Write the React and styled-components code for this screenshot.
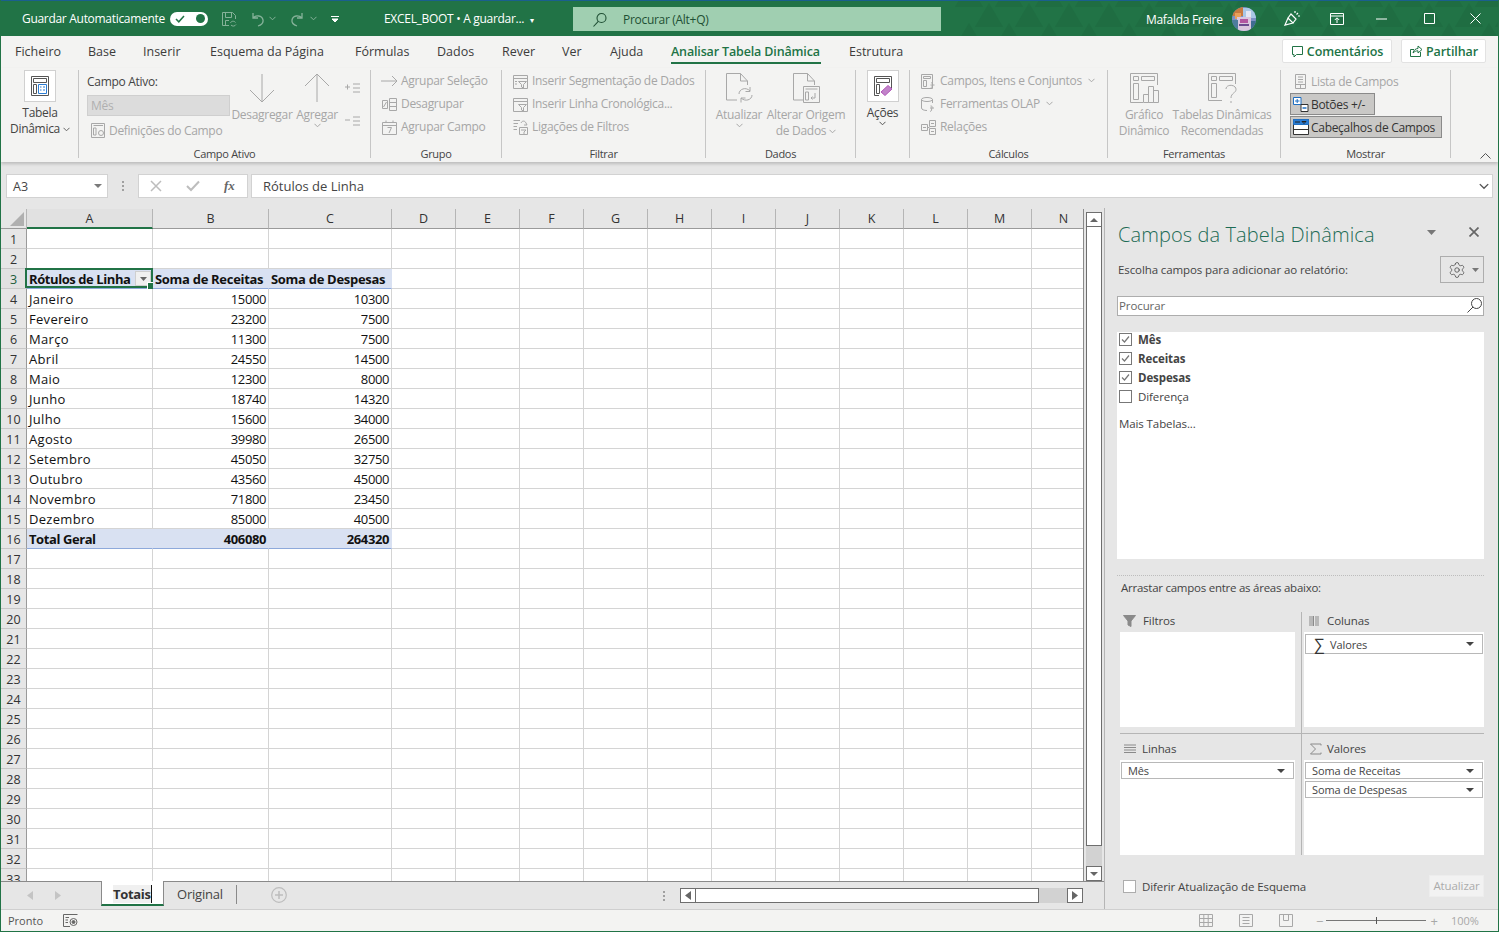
import React from "react";
import styled, { createGlobalStyle } from "styled-components";
import { Settings } from "lucide-react";

const GREEN = "#217346";
const FONT = `"Open Sans", "Noto Sans", "Liberation Sans", sans-serif`;

const Global = createGlobalStyle`
  html, body { margin: 0; padding: 0; background: #fff; }
  * { box-sizing: border-box; }
  body { font-family: ${FONT}; }
`;

const Page = styled.div`
  position: relative; width: 1499px; height: 932px; overflow: hidden;
  border: 1px solid ${GREEN}; border-top: 0;
  background: #f3f3f2; color: #444; font-size: 12px; letter-spacing: -0.3px;
  display: flex; flex-direction: column;
`;

/* ---------- title bar ---------- */
const TitleBar = styled.header`
  position: relative; height: 36px; flex: none; margin: 0 -1px; padding-left: 22px;
  background: ${GREEN}; border-top: 1px solid #1a5f8e; color: #fff;
  display: flex; align-items: center; overflow: hidden;
`;
const Pattern = styled.svg`position: absolute; right: 0; top: 0; pointer-events: none;`;
const TitleText = styled.span`
  position: relative; flex: none; width: ${p => p.$w}px; margin-left: ${p => p.$ml || 0}px;
  font-size: 12px; white-space: nowrap; line-height: 16px; padding-top: ${p => p.$pt ?? 0}px;
`;
const Toggle = styled.span`
  position: relative; flex: none; width: 38px; height: 14px; border-radius: 7px; background: #fff;
  display: flex; align-items: center; justify-content: space-between; padding: 0 3px 0 5px; margin-left: 7px;
`;
const Knob = styled.span`width: 9px; height: 9px; border-radius: 50%; background: ${GREEN};`;
const QatIcon = styled.span`
  position: relative; flex: none; display: flex; align-items: center; justify-content: flex-start;
  width: ${p => p.$w}px; margin-left: ${p => p.$ml || 0}px; opacity: ${p => p.$o ?? 1};
`;
const SearchBar = styled.div`
  position: relative; flex: none; width: 368px; height: 24px; margin-left: 36px; background: #a0cfb1;
  display: flex; align-items: center; padding: 2px 0 0 19px; gap: 15px; color: #1f4f34; font-size: 12px;
`;
const Avatar = styled.svg`position: relative; flex: none; margin-left: 8px;`;

/* ---------- tab row ---------- */
const TabRow = styled.nav`
  height: 32px; flex: none; display: flex; align-items: flex-start; padding-left: 14px;
  background: #f3f3f2; letter-spacing: 0;
`;
const Tab = styled.div`
  flex: none; width: ${p => p.$w}px; height: 32px; padding-top: 7px; line-height: 18px;
  font-size: 12.5px; white-space: nowrap; color: ${p => (p.$on ? GREEN : "#3c3c3c")};
  font-weight: ${p => (p.$on ? 600 : 400)}; letter-spacing: ${p => (p.$on ? "-0.15px" : "0")};
`;
const TabLabel = styled.span`
  display: inline-block; height: 21px;
  border-bottom: ${p => (p.$on ? `2px solid ${GREEN}` : "0")};
  min-width: ${p => (p.$on ? 150 : 0)}px;
`;
const TabSpacer = styled.div`flex: 1;`;
const TabEnd = styled.div`width: 12px; flex: none;`;
const WhiteBtn = styled.div`
  flex: none; width: ${p => p.$w}px; height: 24px; margin: 3px 0 0 ${p => p.$ml}px; background: #fff;
  border: 1px solid #e2e2e2; border-radius: 2px; color: ${GREEN}; font-size: 12.5px; letter-spacing: -0.1px;
  display: flex; align-items: center; justify-content: center; gap: 3px; font-weight: 600;
`;

/* ---------- ribbon ---------- */
const Ribbon = styled.section`
  position: relative; z-index: 2; height: 94px; flex: none; display: flex; align-items: flex-start;
  background: #f3f3f2; padding-top: 2px; box-shadow: 0 2px 3px rgba(0,0,0,.18);
`;
const Group = styled.div`
  flex: none; width: ${p => p.$w}px; height: 88px; border-right: 1px solid #c6c6c6;
`;
const GroupBody = styled.div`
  height: 76px; display: flex; align-items: flex-start; padding-left: ${p => p.$pl || 0}px;
`;
const GroupLabel = styled.div`
  height: 12px; line-height: 16px; text-align: center; font-size: 11px; color: #444;
`;
const BigBtn = styled.div`
  flex: none; width: ${p => p.$w}px; margin-left: ${p => p.$ml || 0}px; text-align: center;
  display: flex; flex-direction: column; align-items: center; white-space: nowrap;
  color: ${p => (p.$off ? "#a6a6a6" : "#444")}; line-height: 16px;
`;
const BigIconBox = styled.div`
  width: 32px; height: 32px; display: flex; align-items: center; justify-content: center;
  background: ${p => (p.$white ? "#fff" : "transparent")};
  border: 1px solid ${p => (p.$white ? "#d0d0d0" : "transparent")};
  margin-top: ${p => p.$mt ?? 0}px;
  margin-bottom: ${p => p.$mb ?? 3}px;
`;
const Chev = styled.svg`display: inline-block; margin-left: ${p => p.$ml ?? 3}px; vertical-align: middle;`;
const Stack = styled.div`
  flex: none; margin-top: ${p => p.$mt ?? -1}px; margin-left: ${p => p.$ml ?? 0}px; display: flex; flex-direction: column;
`;
const StackGap = styled.div`height: ${p => p.$h}px;`;
const SmallBtn = styled.div`
  height: 23px; display: flex; align-items: center; gap: ${p => p.$gap ?? 3}px; white-space: nowrap;
  color: ${p => (p.$off ? "#a6a6a6" : "#444")};
`;
const ListBtn = styled(SmallBtn)`height: 24px; padding-left: 4px;`;
const FieldLabel = styled.div`height: 26px; line-height: 25px; color: #444;`;
const FieldInput = styled.div`
  width: 143px; height: 21px; background: #dcdcdc; border: 1px solid #cfcfcf; color: #b0b0b0;
  line-height: 19px; padding-left: 3px;
`;
const FieldSetting = styled(SmallBtn)`height: 27px; padding-top: 1px; margin-left: 3px; color: #a6a6a6;`;
const Toggled = styled.div`
  width: ${p => p.$w}px; height: 22px; margin-top: ${p => p.$mt || 0}px; background: #c9c8c6; border: 1px solid #8a8a8a;
  display: flex; align-items: center; gap: 1px; padding-left: 1px; color: #333; white-space: nowrap;
`;
const CollapseIcon = styled.svg`position: absolute; right: 7px; bottom: 3px;`;

/* ---------- formula bar ---------- */
const FormulaBar = styled.section`
  height: 46px; flex: none; background: #e6e6e6; padding: 12px 5px 0 5px; display: flex; align-items: flex-start;
  font-size: 13px; letter-spacing: 0;
`;
const NameBox = styled.div`
  width: 102px; height: 24px; background: #fff; border: 1px solid #d2d2d2; color: #444; font-size: 12.5px;
  display: flex; align-items: center; justify-content: space-between; padding: 0 5px 0 6px;
`;
const Grip = styled.div`width: 30px; display: flex; justify-content: center; height: 24px; align-items: center;`;
const FxBox = styled.div`
  width: 110px; height: 24px; background: #fff; border: 1px solid #d2d2d2; position: relative;
  display: flex; align-items: center; padding-left: 11px; gap: 24px;
`;
const FxMark = styled.i`font-family: "Liberation Serif", serif; font-weight: 700; color: #666; font-size: 13px;`;
const FormulaInput = styled.div`
  flex: 1; height: 24px; margin-left: 3px; background: #fff; border: 1px solid #d2d2d2; color: #444;
  display: flex; align-items: center; justify-content: space-between; padding: 0 3px 0 11px;
`;

/* ---------- sheet ---------- */
const Main = styled.main`flex: none; height: 701px; display: flex; background: #e6e6e6;`;
const SheetCol = styled.div`width: 1103px; flex: none; display: flex; flex-direction: column;`;
const SheetRow = styled.div`height: 672px; margin-top: 1px; flex: none; display: flex;`;
const GridClip = styled.div`
  width: 1083px; height: 672px; overflow: hidden; flex: none; background: #fff; border-right: 1px solid #8a8a8a;
  position: relative;
`;
const Grid = styled.div`
  display: grid; grid-template-columns: 26px 126px 116px 123px repeat(11, 64px);
  grid-auto-rows: 20px; font-size: 13px; letter-spacing: 0; color: #111;
`;
const Corner = styled.div`
  background: #e6e6e6; border-right: 1px solid #b5b5b5; border-bottom: 1px solid #9a9a9a;
  display: flex; align-items: flex-end; justify-content: flex-end; padding: 0 2px 2px 0;
`;
const ColHead = styled.div`
  background: ${p => (p.$on ? "#e1e1e1" : "#e6e6e6")}; color: #333; font-size: 12.5px; text-align: center; line-height: 20px;
  border-right: 1px solid #b5b5b5;
  border-bottom: ${p => (p.$on ? `2px solid ${GREEN}` : "1px solid #9a9a9a")};
`;
const RowHead = styled.div`
  background: ${p => (p.$on ? "#e1e1e1" : "#e6e6e6")}; color: ${p => (p.$on ? "#1c5c39" : "#333")}; font-size: 12.5px; text-align: center; line-height: 21px;
  border-right: 1px solid #9a9a9a; border-bottom: 1px solid #c8c8c8;
`;
const Cell = styled.div`
  position: relative; line-height: 20px; white-space: nowrap; overflow: visible;
  padding: 0 2px; text-align: ${p => (p.$num ? "right" : "left")};
  font-weight: ${p => (p.$bold ? 700 : 400)};
  letter-spacing: ${p => (p.$num ? "-0.4px" : p.$bold ? "-0.42px" : "0.3px")};
  background: ${p => (p.$fill ? "#d9e1f2" : "#fff")};
  border-right: 1px solid ${p => (p.$fill ? "#d9e1f2" : "#d4d4d4")};
  border-bottom: 1px solid ${p => (p.$line ? "#8ea9db" : p.$fill ? "#d9e1f2" : "#d4d4d4")};
`;
const HeadCell = styled(Cell)`letter-spacing: -0.3px;`;
const Selection = styled.div`
  position: absolute; inset: -1px -1px 0 -2px; border: 2px solid ${GREEN}; pointer-events: none;
  &::after {
    content: ""; position: absolute; right: -4px; bottom: -4px; width: 6px; height: 6px;
    background: ${GREEN}; border: 1px solid #fff;
  }
`;
const FilterBtn = styled.div`
  position: absolute; right: 1px; top: 2px; width: 16px; height: 15px; background: #f0f0f0; border: 1px solid #cfcfcf;
  display: flex; align-items: center; justify-content: center;
`;
const VScroll = styled.div`
  width: 16px; margin: 3px 0 0 2px; display: flex; flex-direction: column; flex: none;
`;
const ScrollBtn = styled.div`
  flex: none; width: ${p => p.$w || 16}px; height: ${p => p.$h || 15}px; background: #fff; border: 1px solid #6e6e6e;
  display: flex; align-items: center; justify-content: center;
`;
const VThumb = styled.div`height: 620px; background: #fff; border: 1px solid #6e6e6e; flex: none; margin-top: -1px;`;
const Track = styled.div`flex: 1; background: #d2d2d2;`;

const SheetTabs = styled.div`
  height: 28px; flex: none; border-top: 1px solid #8a8a8a; display: flex; align-items: flex-start; background: #e6e6e6;
  font-size: 13px; letter-spacing: 0;
`;
const NavArrows = styled.div`width: 100px; height: 26px; display: flex; align-items: center; padding-left: 26px; gap: 22px; flex: none;`;
const ActiveTab = styled.div`
  flex: none; width: 63px; height: 25px; margin-top: -1px; background: #fff; border: 1px solid #8a8a8a; border-top: 0;
  border-bottom: 2px solid ${GREEN}; font-weight: 700; color: #333; display: flex; justify-content: flex-start; align-items: center; padding: 2px 0 0 11px;
`;
const TabCaret = styled.span`border-right: 1px solid #111; line-height: 18px; background: #f0f0f0; letter-spacing: -0.3px;`;
const PlainTab = styled.div`
  flex: none; width: 73px; height: 19px; margin-top: 3px; border-right: 1px solid #8a8a8a; padding-left: 13px; color: #444; line-height: 18px; letter-spacing: -0.2px;
`;
const AddCircle = styled.svg`flex: none; margin: 5px 0 0 34px;`;
const Fill = styled.div`flex: 1;`;
const Dots = styled.div`flex: none; display: flex; flex-direction: column; gap: 2px; margin: 9px 15px 0 0;`;
const GripDots = styled(Dots)`margin: 0;`;
const Dot = styled.span`width: 2px; height: 2px; background: #a0a0a0;`;
const HScroll = styled.div`flex: none; width: 403px; height: 15px; margin: 6px 21px 0 0; display: flex;`;
const HThumb = styled.div`width: 344px; background: #fff; border: 1px solid #6e6e6e; margin-left: -1px; flex: none;`;

/* ---------- pivot pane ---------- */
const Pane = styled.aside`
  width: 394px; flex: none; border-left: 1px solid #b5b5b5; padding: 14px 14px 0 12px; background: #e6e6e6; letter-spacing: -0.1px;
`;
const PaneHead = styled.div`height: 26px; display: flex; align-items: center; padding-left: 1px;`;
const PaneTitle = styled.h2`
  margin: 0; flex: none; width: 309px; font-size: 20px; font-weight: 300; color: #1d6b55; letter-spacing: 0.1px; white-space: nowrap; line-height: 26px;
`;
const PaneClose = styled.svg`flex: none; margin: -6px 0 0 33px;`;
const PaneArrow = styled.svg`flex: none; margin-top: -6px;`;
const SubRow = styled.div`height: 27px; margin-top: 8px; display: flex; align-items: center; justify-content: space-between; padding-left: 1px; color: #444; font-size: 11.5px;`;
const GearBox = styled.div`width: 44px; height: 27px; border: 1px solid #adadad; display: flex; align-items: center; gap: 6px; padding-left: 7px;`;
const PaneSearch = styled.div`
  height: 20px; margin-top: 13px; background: #fff; border: 1px solid #adadad; display: flex; align-items: center;
  justify-content: space-between; padding: 0 0 1px 1px; color: #666; font-size: 11.5px;
`;
const FieldList = styled.div`
  height: 227px; margin-top: 16px; background: #fff; padding: 0 2px; font-size: 11.5px;
  display: flex; flex-direction: column;
`;
const FieldRows = styled.div`flex: none; margin-top: -2px;`;
const FieldItem = styled.label`
  height: 19px; display: flex; align-items: center; gap: 6px; color: #444; font-weight: ${p => (p.$bold ? 700 : 400)};
`;
const Box = styled.span`
  width: 13px; height: 13px; flex: none; background: #fff; border: 1px solid ${p => p.$c || "#777"}; display: flex; align-items: center; justify-content: center;
`;
const MoreTables = styled.div`margin-top: 10px; color: #444; line-height: 16px;`;
const Dotted = styled.div`height: 1px; margin-top: 16px; border-top: 1px dotted #bdbdbd;`;
const DragHint = styled.div`height: 16px; margin: 4px 0 0 4px; line-height: 16px; color: #444; font-size: 11.5px; letter-spacing: -0.25px;`;
const Areas = styled.div`
  margin: 16px 0 0 3px; display: grid; grid-template-columns: 181px 183px; grid-template-rows: 122px 121px; font-size: 11.5px;
`;
const Area = styled.div`
  padding: ${p => (p.$low ? 6 : 0)}px ${p => (p.$right ? 0 : 6)}px 0 ${p => (p.$right ? 2 : 0)}px;
  border-left: ${p => (p.$right ? "1px solid #b5b5b5" : "0")};
  border-bottom: ${p => (p.$low ? "0" : "1px solid #b5b5b5")};
`;
const AreaHead = styled.div`height: 20px; display: flex; align-items: center; color: #444; padding: 0 0 3px ${p => p.$pl || 4}px; gap: ${p => p.$gap ?? 7}px;`;
const AreaBody = styled.div`height: 95px; background: #fff; padding: 2px 1px 0; display: flex; flex-direction: column; gap: 2px;`;
const Pill = styled.div`
  height: ${p => p.$h || 17}px; flex: none; background: #fff; border: 1px solid #b8b8b8; display: flex; align-items: center;
  justify-content: space-between; padding: 0 8px 0 6px; color: #444; font-size: 11px; letter-spacing: -0.1px;
`;
const PillText = styled.span`display: flex; align-items: center; gap: 6px;`;
const Sigma = styled.span`font-size: 16px; line-height: 14px; margin-left: 2px; color: #333;`;
const PaneFoot = styled.div`margin-top: 20px; height: 22px; display: flex; align-items: center; padding-left: 6px; gap: 6px; color: #444; font-size: 11.5px;`;
const UpdateBtn = styled.div`
  margin-left: auto; margin-right: 0; width: 55px; height: 22px; background: #f2f2f2; color: #ababab; border: 1px solid #ededed; text-align: center; line-height: 20px;
`;

/* ---------- status bar ---------- */
const StatusBar = styled.footer`
  position: relative; z-index: 1; height: 22px; flex: none; background: #f3f3f2; border-top: 1px solid #cfcfcf; display: flex; align-items: center;
  padding-left: 7px; font-size: 11px; color: #555; letter-spacing: 0;
`;
const StatusIcon = styled.svg`flex: none; margin-left: ${p => p.$ml}px;`;
const ZoomLine = styled.div`
  flex: none; position: relative; width: 100px; height: 1px; background: #777; margin: 0 4px 0 3px;
  &::after { content: ""; position: absolute; left: 50%; top: -3px; width: 1px; height: 7px; background: #555; }
`;
const ZoomSign = styled.span`flex: none; color: #a8a8a8; font-size: 13px; margin-left: ${p => p.$ml || 0}px;`;
const ZoomPct = styled.span`flex: none; color: #a8a8a8; margin-left: 13px;`;
const SmallCaret = styled.span`font-size: 8px;`;

/* ---------- drawings ---------- */
const Ico = ({ w = 16, h = 16, c = "#a8a8a8", sw = 1, children }) => (
  <svg width={w} height={h} viewBox={`0 0 ${w} ${h}`} fill="none" stroke={c} strokeWidth={sw} style={{ flex: "none", display: "block" }}>{children}</svg>
);
const Down = ({ c = "#666", ml = 3, w = 7, h = 5 }) => (
  <Chev $ml={ml} width={w} height={h} viewBox="0 0 7 5" fill="none" stroke={c}><path d="M.5 .8 3.5 3.8 6.5 .8" /></Chev>
);
const Tri = ({ c = "#555", w = 9, h = 5, dir = "down" }) => {
  const d = { down: `M0 0H${w}L${w / 2} ${h}Z`, up: `M0 ${h}H${w}L${w / 2} 0Z` }[dir];
  return <svg width={w} height={h} viewBox={`0 0 ${w} ${h}`} style={{ flex: "none", display: "block" }}><path d={d} fill={c} /></svg>;
};
const TriSide = ({ left, c = "#555" }) => (
  <svg width="6" height="9" viewBox="0 0 6 9" style={{ display: "block" }}><path d={left ? "M6 0V9L0 4.5Z" : "M0 0V9L6 4.5Z"} fill={c} /></svg>
);
const SlicerIcon = ({ c = "#a8a8a8", tall }) => (
  <Ico c={c}><path d="M1.5 2.5H15.5V15.5H1.5Z" /><path d="M1.5 5.5H15.5" /><path d="M6.5 8.5H14.5L11.5 11.5V15L9.5 14V11.5Z" fill="#f3f3f2" />{tall && <path d="M3 8.5H5M3 11H5" />}</Ico>
);
const PivotDoc = () => (
  <Ico w={22} h={22} c="#555">
    <path d="M2.5 1.5H19.5V20.5H2.5Z" />
    <path d="M4.5 3.5H17.5V7.5H4.5ZM4.5 9.5H7.5V18.5H4.5Z" />
    <path d="M9.5 9.5H17.5V18.5H9.5Z" stroke="#2b7cd3" />
    <path d="M11 12H12.5M14 12H16M11 15H12.5M14 15H16" stroke="#2b7cd3" />
  </Ico>
);

const hexes = [];
for (let r = 0; r < 3; r++) for (let i = 0; i < 14; i++) {
  const x = 30 + i * 40 + (r % 2) * 20, y = r * 20 - 4;
  hexes.push(<path key={`${r}-${i}`} d={`M${x} ${y - 14}L${x + 14} ${y + 10}H${x - 14}Z`} />);
}

const rows = [
  ["Janeiro", 15000, 10300], ["Fevereiro", 23200, 7500], ["Março", 11300, 7500], ["Abril", 24550, 14500],
  ["Maio", 12300, 8000], ["Junho", 18740, 14320], ["Julho", 15600, 34000], ["Agosto", 39980, 26500],
  ["Setembro", 45050, 32750], ["Outubro", 43560, 45000], ["Novembro", 71800, 23450], ["Dezembro", 85000, 40500],
];
const cols = "ABCDEFGHIJKLMN".split("");
const tabs = [
  ["Ficheiro", 73], ["Base", 55], ["Inserir", 67], ["Esquema da Página", 145], ["Fórmulas", 82], ["Dados", 65],
  ["Rever", 60], ["Ver", 48], ["Ajuda", 61],
];

function rowCells(n) {
  const blanks = (from) => cols.slice(from).map(c => <Cell key={c} />);
  if (n === 3) return (<>
    <Cell $bold $fill $line>Rótulos de Linha
      <FilterBtn><Tri c="#666" w={7} h={4} /></FilterBtn><Selection />
    </Cell>
    <HeadCell $bold $fill $line>Soma de Receitas</HeadCell>
    <HeadCell $bold $fill $line>Soma de Despesas</HeadCell>
    {blanks(3)}
  </>);
  if (n >= 4 && n <= 15) {
    const [m, a, b] = rows[n - 4];
    return (<><Cell>{m}</Cell><Cell $num>{a}</Cell><Cell $num>{b}</Cell>{blanks(3)}</>);
  }
  if (n === 16) return (<>
    <Cell $bold $fill $line>Total Geral</Cell><Cell $bold $fill $line $num>406080</Cell><Cell $bold $fill $line $num>264320</Cell>{blanks(3)}
  </>);
  return blanks(0);
}

export default function App() {
  const off = "#a8a8a8";
  return (
    <Page>
      <Global />
      <TitleBar>
        <Pattern width="560" height="36" viewBox="0 0 560 36" fill="#1e6a40" opacity=".6">{hexes}</Pattern>
        <TitleText $w={141} $pt={1}>Guardar Automaticamente</TitleText>
        <Toggle>
          <svg width="10" height="8" viewBox="0 0 10 8" fill="none" stroke={GREEN} strokeWidth="1.5"><path d="M1 4 3.8 6.8 9 1" /></svg>
          <Knob />
        </Toggle>
        <QatIcon $w={28} $ml={12} $o={.45}>
          <Ico w={18} h={18} c="#fff"><path d="M9 15.5H2.5V2.5H12.500L15.500 5.500V9M5.500 2.500V7.500H11.500V2.500M5.500 15.500V10.500H9" /><path d="M10.500 13C11 11 14 10.500 15.500 12.500M16 14.500C15 16.500 12 16.500 11 15" /></Ico>
        </QatIcon>
        <QatIcon $w={41} $o={.45}>
          <Ico w={18} h={18} c="#fff" sw={1.3}><path d="M5 3V8H10M5 8C8 5 14 5 15 10 15.5 13 13 15 10 16" /></Ico>
          <Down c="#fff" />
        </QatIcon>
        <QatIcon $w={42} $o={.45}>
          <Ico w={18} h={18} c="#fff" sw={1.3}><path d="M13 3V8H8M13 8C10 5 4 5 3 10 2.5 13 5 15 8 16" /></Ico>
          <Down c="#fff" />
        </QatIcon>
        <QatIcon $w={53}>
          <Ico w={8} h={8} c="#fff"><path d="M0 1.5H8" /><path d="M1 4 4 7 7 4Z" fill="#fff" /></Ico>
        </QatIcon>
        <TitleText $w={153} $pt={1}>EXCEL_BOOT • A guardar...&nbsp; <SmallCaret>▾</SmallCaret></TitleText>
        <SearchBar>
          <Ico w={16} h={16} c="#1f4f34" sw={1.1}><circle cx="9.5" cy="6" r="4.5" /><path d="M6.3 9.3 1.5 14.5" /></Ico>
          Procurar (Alt+Q)
        </SearchBar>
        <TitleText $w={78} $ml={205} $pt={3}>Mafalda Freire</TitleText>
        <Avatar width="24" height="24" viewBox="0 0 24 24">
          <defs><clipPath id="av"><circle cx="12" cy="12" r="12" /></clipPath></defs>
          <g clipPath="url(#av)">
            <rect width="24" height="24" fill="#7d91c7" />
            <rect x="0" y="0" width="11" height="9" fill="#c7793f" />
            <rect x="3" y="6" width="6" height="6" fill="#e9a05a" />
            <rect x="11" y="1" width="13" height="10" fill="#a9c7e6" />
            <rect x="14" y="4" width="5" height="9" fill="#e4e7f3" />
            <rect x="5" y="10" width="14" height="14" fill="#d9c6de" />
            <rect x="8" y="12" width="8" height="4" fill="#b255a0" />
            <rect x="7" y="17" width="10" height="2" fill="#6b4a8f" />
            <rect x="0" y="13" width="6" height="11" fill="#4d7c9c" />
            <rect x="19" y="14" width="5" height="10" fill="#3f6c91" />
          </g>
        </Avatar>
        <QatIcon $w={18} $ml={27}>
          <Ico w={18} h={18} c="#fff" sw={1.2}><path d="M2 15 5 8 10 13ZM5 8 8 4 13 9 10 13M12 1V3M15 3 13.5 4.5M17 6H15" /></Ico>
        </QatIcon>
        <QatIcon $w={14} $ml={29}>
          <Ico w={14} h={12} c="#fff"><path d="M.5 .5H13.5V11.5H.5ZM.5 3H13.5" /><path d="M7 10V5M4.8 7 7 4.8 9.2 7" /></Ico>
        </QatIcon>
        <QatIcon $w={12} $ml={32}><Ico w={11} h={2} c="#fff"><path d="M0 1H11" /></Ico></QatIcon>
        <QatIcon $w={11} $ml={36}><Ico w={11} h={11} c="#fff"><path d="M.5 .5H10.5V10.5H.5Z" /></Ico></QatIcon>
        <QatIcon $w={11} $ml={35}><Ico w={11} h={11} c="#fff"><path d="M.5 .5 10.5 10.5M10.5 .5 .5 10.5" /></Ico></QatIcon>
      </TitleBar>

      <TabRow>
        {tabs.map(([t, w]) => <Tab key={t} $w={w}>{t}</Tab>)}
        <Tab $w={178} $on><TabLabel $on>Analisar Tabela Dinâmica</TabLabel></Tab>
        <Tab $w={70}>Estrutura</Tab>
        <TabSpacer />
        <WhiteBtn $w={110} $ml={0}>
          <Ico w={13} h={13} c={GREEN}><path d="M1.5 1.5H11.5V9.5H5.5L3 12V9.5H1.5Z" /></Ico>Comentários
        </WhiteBtn>
        <WhiteBtn $w={85} $ml={9}>
          <Ico w={14} h={14} c={GREEN}><path d="M1.5 5.5H5M1.5 5.5V12.5H11.5V8M4 9C4.5 6 7 4.5 9 4.5V2L13 5.5 9 9V6.8C7 6.8 5.5 7.5 4 9Z" /></Ico>Partilhar
        </WhiteBtn>
        <TabEnd />
      </TabRow>

      <Ribbon>
        <Group $w={78}>
          <GroupBody>
            <BigBtn $w={78}>
              <BigIconBox $white><PivotDoc /></BigIconBox>
              Tabela
              <span>Dinâmica<Down /></span>
            </BigBtn>
          </GroupBody>
        </Group>

        <Group $w={292}>
          <GroupBody $pl={8}>
            <Stack>
              <FieldLabel>Campo Ativo:</FieldLabel>
              <FieldInput>Mês</FieldInput>
              <FieldSetting $gap={3}>
                <Ico w={16} h={17} c={off}><path d="M1.5 1.5H14.5V15.5H1.5ZM3.5 3.5H13M3.5 6H6V13H3.5Z" /><circle cx="11" cy="11" r="2.5" /></Ico>
                Definições do Campo
              </FieldSetting>
            </Stack>
            <BigBtn $w={60} $ml={2} $off>
              <BigIconBox $mt={2} $mb={3}>
                <Ico w={28} h={30} c={off}><path d="M14 1V29M2 17 14 29 26 17" /></Ico>
              </BigIconBox>
              Desagregar
            </BigBtn>
            <BigBtn $w={42} $ml={4} $off>
              <BigIconBox $mt={2} $mb={3}>
                <Ico w={28} h={30} c={off}><path d="M14 29V1M2 13 14 1 26 13" /></Ico>
              </BigIconBox>
              Agregar
              <Down c={off} ml={0} />
            </BigBtn>
            <Stack $ml={7} $mt={12}>
              <Ico w={16} h={14} c={off}><path d="M0 5H5M2.5 2.5V7.5M8 2H15M8 6H15M8 10H15" /></Ico>
              <StackGap $h={19} />
              <Ico w={16} h={14} c={off}><path d="M0 5H5M8 2H15M8 6H15M8 10H15" /></Ico>
            </Stack>
          </GroupBody>
          <GroupLabel>Campo Ativo</GroupLabel>
        </Group>

        <Group $w={131}>
          <GroupBody $pl={10}>
            <Stack>
              <SmallBtn $off>
                <Ico w={17} c={off}><path d="M0 8H16M11 3 16 8 11 13" /></Ico>Agrupar Seleção
              </SmallBtn>
              <SmallBtn $off>
                <Ico w={17} c={off}><path d="M1.5 4.5H6.5V12.5H1.5ZM8.5 2.5H15.5V14.5H8.5ZM8.5 6.5H15.5M8.5 10.5H15.5M2.5 11 5.5 6" /></Ico>Desagrupar
              </SmallBtn>
              <SmallBtn $off>
                <Ico w={17} c={off}><path d="M1.5 3.5H15.5V15.5H1.5ZM1.5 6.5H15.5M5 1.5V3.5M12 1.5V3.5M6.5 8.5H10.5L8 14" /></Ico>Agrupar Campo
              </SmallBtn>
            </Stack>
          </GroupBody>
          <GroupLabel>Grupo</GroupLabel>
        </Group>

        <Group $w={204}>
          <GroupBody $pl={10}>
            <Stack>
              <SmallBtn $off $gap={4}><SlicerIcon tall />Inserir Segmentação de Dados</SmallBtn>
              <SmallBtn $off $gap={4}><SlicerIcon />Inserir Linha Cronológica...</SmallBtn>
              <SmallBtn $off $gap={4}>
                <Ico w={16} c={off}><path d="M1.5 1.5H8M1.5 4.5H6M1.5 7.5H5M1.5 10.5H5" /><path d="M7.5 8.5H15.5V15.5H7.5ZM9 11H14L12 13V15" /><path d="M9 4C10 1.5 13 1.5 14 4L15 6H12" /></Ico>Ligações de Filtros
              </SmallBtn>
            </Stack>
          </GroupBody>
          <GroupLabel>Filtrar</GroupLabel>
        </Group>

        <Group $w={150}>
          <GroupBody $pl={7}>
            <BigBtn $w={52} $off>
              <BigIconBox $mt={2} $mb={3}>
                <Ico w={30} h={32} c={off}><path d="M13 28H2.5V1.5H16.5L23.5 9V13M16.5 1.5V9H23.5" /><path d="M15 22C15 17 22 14.5 26 19M28 23C28 28 21 30 17 26M26 15V19.5H21.5M17 30.5V26H21.5" /></Ico>
              </BigIconBox>
              Atualizar
              <Down c={off} ml={0} />
            </BigBtn>
            <BigBtn $w={82} $off>
              <BigIconBox $mt={2} $mb={3}>
                <Ico w={30} h={32} c={off}><path d="M12 28H2.5V1.5H16.5L23.5 9V13M16.5 1.5V9H23.5" /><path d="M12.5 14.5H28.5V30.5H12.5ZM14.5 17H26.5M14.5 20H17.5V28H14.5ZM24 21V26H20M21.5 24.5 20 26 21.5 27.5" /></Ico>
              </BigIconBox>
              Alterar Origem
              <span>de Dados<Down c={off} /></span>
            </BigBtn>
          </GroupBody>
          <GroupLabel>Dados</GroupLabel>
        </Group>

        <Group $w={54}>
          <GroupBody>
            <BigBtn $w={53}>
              <BigIconBox $white>
                <Ico w={22} h={22} c="#555"><path d="M2.5 1.5H19.5V13M2.5 1.5V20.5H7M4.5 3.5H17.5V7.5H4.5ZM4.5 9.5H7.5V18.5H4.5Z" /><path d="M9 17 16 10.5 20 14 13 20.5Z" fill="#c183c9" stroke="#b257b9" /></Ico>
              </BigIconBox>
              Ações
              <Down c="#555" ml={0} />
            </BigBtn>
          </GroupBody>
        </Group>

        <Group $w={198}>
          <GroupBody $pl={10}>
            <Stack>
              <SmallBtn $off $gap={3}>
                <Ico w={17} c={off}><path d="M1.5 1.5H12.5V15.5H1.5ZM3.5 3.5H10.5V5.5H3.5ZM3.5 7.5H6.5V13.5H3.5ZM11 10C12 9.5 12.5 10 12.5 11.5L12 14C11.8 15.5 11 15.5 10.5 15M10.5 12H14.5" /></Ico>
                Campos, Itens e Conjuntos<Down c={off} />
              </SmallBtn>
              <SmallBtn $off $gap={3}>
                <Ico w={17} c={off}><ellipse cx="7" cy="3.5" rx="5.5" ry="2" /><path d="M1.5 3.5V12C1.5 13.5 4 14.5 7 14.5M12.5 3.5V7M10.5 10C11.5 9.5 12 10 12 11.5L11.5 14C11.3 15.5 10.5 15.5 10 15M10 12H14" /></Ico>
                Ferramentas OLAP<Down c={off} />
              </SmallBtn>
              <SmallBtn $off $gap={3}>
                <Ico w={17} c={off}><path d="M1.5 5.5H7.5V11.5H1.5ZM9.5 1.5H15.5V7.5H9.5ZM9.5 9.5H15.5V15.5H9.5ZM3 8.5H6M11 4.5H14M11 12.5H14M7.5 8.5H9.5" /></Ico>
                Relações
              </SmallBtn>
            </Stack>
          </GroupBody>
          <GroupLabel>Cálculos</GroupLabel>
        </Group>

        <Group $w={173}>
          <GroupBody>
            <BigBtn $w={72} $off>
              <BigIconBox $mt={2} $mb={3}>
                <Ico w={32} h={32} c={off}><path d="M15 30.5H2.5V1.5H29.5V13M5.5 4.5H10.5V8.5H5.5ZM13.5 4.5H26.5V8.5H13.5ZM5.5 11.5H10.5V27.5H5.5Z" /><path d="M15.5 22.5H20.5V30.5H15.5ZM20.5 14.5H25.5V30.5H20.5ZM25.5 18.5H30.5V30.5H25.5Z" /></Ico>
              </BigIconBox>
              Gráfico
              <span>Dinâmico</span>
            </BigBtn>
            <BigBtn $w={84} $off>
              <BigIconBox $mt={2} $mb={3}>
                <Ico w={32} h={32} c={off}><path d="M16 28.5H2.5V1.5H29.5V12M5.5 4.5H10.5V8.5H5.5ZM13.5 4.5H26.5V8.5H13.5ZM5.5 11.5H10.5V25.5H5.5Z" /><path d="M20 17C20 12 30 12 30 17.5 30 21 25 21 25 26M25 29V31" /></Ico>
              </BigIconBox>
              Tabelas Dinâmicas
              <span>Recomendadas</span>
            </BigBtn>
          </GroupBody>
          <GroupLabel>Ferramentas</GroupLabel>
        </Group>

        <Group $w={170}>
          <GroupBody $pl={9}>
            <Stack>
              <ListBtn $off $gap={4}>
                <Ico w={13} h={17} c={off}><path d="M1.5 1.5H11.5V15.5H1.5ZM1.5 11.5H11.5M6.5 11.5V15.5M4 4H9M4 6.5H9M4 9H9" /></Ico>
                Lista de Campos
              </ListBtn>
              <Toggled $w={85}>
                <Ico w={18} h={18} c="#333"><path d="M1.5 2.5H9V9.5H1.5Z" stroke="#1f6fc2" fill="#fff" /><path d="M3 6H7.5M5.2 4V8" stroke="#1f6fc2" /><path d="M9 9.5H16V16.5H9Z" fill="#fff" /><path d="M10.5 13H14.5" stroke="#1f6fc2" strokeWidth="1.5" /></Ico>
                Botões +/-
              </Toggled>
              <Toggled $w={152} $mt={1}>
                <Ico w={18} h={18} c="#333"><path d="M1.5 1.5H16.5V16.5H1.5Z" fill="#fff" /><path d="M1.5 1.5H16.5V6.5H1.5Z" fill="#2b7cd3" stroke="#1f6fc2" /><path d="M3 4H8M10 3.5H14L12 5.5Z" stroke="#222" /><path d="M1.5 11.5H16.5" /></Ico>
                Cabeçalhos de Campos
              </Toggled>
            </Stack>
          </GroupBody>
          <GroupLabel>Mostrar</GroupLabel>
        </Group>
        <CollapseIcon width="11" height="6" viewBox="0 0 11 6" fill="none" stroke="#555"><path d="M.5 5.5 5.5 .5 10.5 5.5" /></CollapseIcon>
      </Ribbon>

      <FormulaBar>
        <NameBox>A3<Tri c="#7a7a7a" w={8} h={4} /></NameBox>
        <Grip><GripDots><Dot /><Dot /><Dot /></GripDots></Grip>
        <FxBox>
          <Ico w={12} h={12} c="#bdbdbd" sw={1.5}><path d="M1 1 11 11M11 1 1 11" /></Ico>
          <Ico w={14} h={12} c="#bdbdbd" sw={2}><path d="M1 6 5 10 13 1.5" /></Ico>
          <FxMark>fx</FxMark>
        </FxBox>
        <FormulaInput>Rótulos de Linha<Down c="#555" ml={0} w={10} h={7} /></FormulaInput>
      </FormulaBar>

      <Main>
        <SheetCol>
          <SheetRow>
            <GridClip>
              <Grid>
                <Corner><svg width="14" height="14" viewBox="0 0 14 14" style={{ display: "block" }}><path d="M14 0V14H0Z" fill="#b0b0b0" /></svg></Corner>
                {cols.map(c => <ColHead key={c} $on={c === "A"}>{c}</ColHead>)}
                {Array.from({ length: 33 }, (_, i) => i + 1).map(n => (
                  <React.Fragment key={n}>
                    <RowHead $on={n === 3}>{n}</RowHead>
                    {rowCells(n)}
                  </React.Fragment>
                ))}
              </Grid>
            </GridClip>
            <VScroll>
              <ScrollBtn><Tri c="#666" w={8} h={4} dir="up" /></ScrollBtn>
              <VThumb />
              <Track />
              <ScrollBtn><Tri c="#666" w={8} h={4} /></ScrollBtn>
            </VScroll>
          </SheetRow>
          <SheetTabs>
            <NavArrows><TriSide left c="#c4c4c4" /><TriSide c="#c4c4c4" /></NavArrows>
            <ActiveTab><TabCaret>Totais</TabCaret></ActiveTab>
            <PlainTab>Original</PlainTab>
            <AddCircle width="16" height="16" viewBox="0 0 16 16" fill="none" stroke="#bdbdbd"><circle cx="8" cy="8" r="7.3" strokeWidth="1.2" /><path d="M8 4V12M4 8H12" strokeWidth="1.5" /></AddCircle>
            <Fill />
            <Dots><Dot /><Dot /><Dot /></Dots>
            <HScroll>
              <ScrollBtn $h={15}><TriSide left c="#666" /></ScrollBtn>
              <HThumb />
              <Track />
              <ScrollBtn $h={15}><TriSide c="#666" /></ScrollBtn>
            </HScroll>
          </SheetTabs>
        </SheetCol>

        <Pane>
          <PaneHead>
            <PaneTitle>Campos da Tabela Dinâmica</PaneTitle>
            <PaneArrow width="9" height="5" viewBox="0 0 9 5"><path d="M0 0H9L4.5 5Z" fill="#777" /></PaneArrow>
            <PaneClose width="10" height="10" viewBox="0 0 10 10" fill="none" stroke="#666" strokeWidth="1.7"><path d="M.5 .5 9.5 9.5M9.5 .5 .5 9.5" /></PaneClose>
          </PaneHead>
          <SubRow>
            Escolha campos para adicionar ao relatório:
            <GearBox><Settings size={18} color="#444" strokeWidth={1} /><Tri c="#777" w={7} h={4} /></GearBox>
          </SubRow>
          <PaneSearch>
            Procurar
            <Ico w={17} h={17} c="#444"><circle cx="10.5" cy="6.5" r="5" /><path d="M7 10 1.5 15.5" /></Ico>
          </PaneSearch>
          <FieldList>
            <FieldRows>
              {["Mês", "Receitas", "Despesas"].map(f => (
                <FieldItem key={f} $bold>
                  <Box><Ico w={11} h={11} c="#777" sw={1.2}><path d="M2 5.5 4.5 8 9 2.5" /></Ico></Box>{f}
                </FieldItem>
              ))}
              <FieldItem><Box />Diferença</FieldItem>
            </FieldRows>
            <MoreTables>Mais Tabelas...</MoreTables>
          </FieldList>
          <Dotted />
          <DragHint>Arrastar campos entre as áreas abaixo:</DragHint>
          <Areas>
            <Area>
              <AreaHead $pl={3}><Ico w={13} h={12} c="#8a8a8a"><path d="M.5 .5H12.5L8 6V11.5L5 10V6Z" fill="#8a8a8a" /></Ico>Filtros</AreaHead>
              <AreaBody />
            </Area>
            <Area $right>
              <AreaHead $pl={5} $gap={5}><Ico w={13} h={12} c="#8a8a8a"><path d="M1 1V11M3 1V11M4.5 1V11M7 1V11M9 1V11" /></Ico>Colunas</AreaHead>
              <AreaBody>
                <Pill $h={20}><PillText><Sigma>∑</Sigma>Valores</PillText><Tri c="#444" w={8} h={4} /></Pill>
              </AreaBody>
            </Area>
            <Area $low>
              <AreaHead $pl={4} $gap={6}><Ico w={12} h={10} c="#8a8a8a"><path d="M0 1H12M0 3.5H12M0 6H12M0 8.5H12" /></Ico>Linhas</AreaHead>
              <AreaBody>
                <Pill><span>Mês</span><Tri c="#444" w={8} h={4} /></Pill>
              </AreaBody>
            </Area>
            <Area $right $low>
              <AreaHead $pl={5} $gap={5}><Ico w={13} h={12} c="#8a8a8a"><path d="M12 2.5V1H1.5L6.5 6 1.5 11H12V9.5" /></Ico>Valores</AreaHead>
              <AreaBody>
                <Pill><span>Soma de Receitas</span><Tri c="#444" w={8} h={4} /></Pill>
                <Pill><span>Soma de Despesas</span><Tri c="#444" w={8} h={4} /></Pill>
              </AreaBody>
            </Area>
          </Areas>
          <PaneFoot>
            <Box $c="#adadad" />
            Diferir Atualização de Esquema
            <UpdateBtn>Atualizar</UpdateBtn>
          </PaneFoot>
        </Pane>
      </Main>

      <StatusBar>
        Pronto
        <StatusIcon $ml={20} width="15" height="13" viewBox="0 0 15 13" fill="none" stroke="#666"><path d="M.5 .5H14.5M.5 .5V12.5H7M2.5 3.5H6M2.5 6H5M2.5 8.5H5" /><circle cx="10.5" cy="8" r="3.5" /><circle cx="10.5" cy="8" r="1.5" fill="#666" /></StatusIcon>
        <StatusIcon $ml={1121} width="14" height="13" viewBox="0 0 14 13" fill="none" stroke="#a8a8a8"><path d="M.5 .5H13.5V12.5H.5ZM.5 4.5H13.5M.5 8.5H13.5M4.8 .5V12.5M9.2 .5V12.5" /></StatusIcon>
        <StatusIcon $ml={26} width="14" height="13" viewBox="0 0 14 13" fill="none" stroke="#a8a8a8"><path d="M.5 .5H13.5V12.5H.5ZM3.5 3.5H10.5M3.5 6.5H10.5M3.5 9.5H10.5" /></StatusIcon>
        <StatusIcon $ml={26} width="14" height="13" viewBox="0 0 14 13" fill="none" stroke="#a8a8a8"><path d="M.5 .5H13.5V12.5H.5ZM4.5 .5V6.5H9.5V.5" /></StatusIcon>
        <ZoomSign $ml={23}>−</ZoomSign>
        <ZoomLine />
        <ZoomSign>+</ZoomSign>
        <ZoomPct>100%</ZoomPct>
      </StatusBar>
    </Page>
  );
}
